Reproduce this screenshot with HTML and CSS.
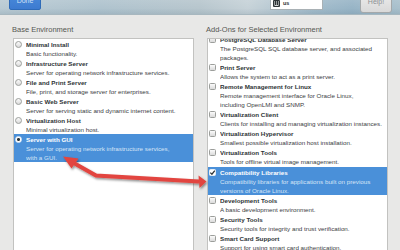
FILE: index.html
```html
<!DOCTYPE html>
<html>
<head>
<meta charset="utf-8">
<link rel="stylesheet" href="styles.css">
</head>
<body>
<div class="page">
  <header class="topbar">
    <button class="done">Done</button>
    <div class="kbd">
      <svg class="kbd-icon" viewBox="0 0 7 7" width="7" height="7">
        <rect x="0" y="0" width="7" height="7" rx="1" fill="#2e3436"/>
        <rect x="1" y="1.5" width="1" height="1" fill="#fff"/>
        <rect x="3" y="1.5" width="1" height="1" fill="#fff"/>
        <rect x="5" y="1.5" width="1" height="1" fill="#fff"/>
        <rect x="1" y="3.5" width="1" height="1" fill="#fff"/>
        <rect x="3" y="3.5" width="1" height="1" fill="#fff"/>
        <rect x="5" y="3.5" width="1" height="1" fill="#fff"/>
        <rect x="1.5" y="5.2" width="4" height="0.8" fill="#fff"/>
      </svg>
      <span class="kbd-label">us</span>
    </div>
    <button class="help">Help!</button>
  </header>

  <main class="content">
    <section class="col">
      <h2 class="col-title">Base Environment</h2>
      <div class="list">
        <div class="item">
          <span class="radio"></span>
          <div class="txt"><div class="name">Minimal Install</div><div class="desc">Basic functionality.</div></div>
        </div>
        <div class="item">
          <span class="radio"></span>
          <div class="txt"><div class="name">Infrastructure Server</div><div class="desc">Server for operating network infrastructure services.</div></div>
        </div>
        <div class="item">
          <span class="radio"></span>
          <div class="txt"><div class="name">File and Print Server</div><div class="desc">File, print, and storage server for enterprises.</div></div>
        </div>
        <div class="item">
          <span class="radio"></span>
          <div class="txt"><div class="name">Basic Web Server</div><div class="desc">Server for serving static and dynamic internet content.</div></div>
        </div>
        <div class="item">
          <span class="radio"></span>
          <div class="txt"><div class="name">Virtualization Host</div><div class="desc">Minimal virtualization host.</div></div>
        </div>
        <div class="item selected">
          <span class="radio on"></span>
          <div class="txt"><div class="name">Server with GUI</div><div class="desc">Server for operating network infrastructure services,<br>with a GUI.</div></div>
        </div>
      </div>
    </section>

    <section class="col">
      <h2 class="col-title">Add-Ons for Selected Environment</h2>
      <div class="list">
        <div class="scroller">
          <div class="item">
            <span class="check"></span>
            <div class="txt"><div class="name">PostgreSQL Database Server</div><div class="desc">The PostgreSQL SQL database server, and associated<br>packages.</div></div>
          </div>
          <div class="item">
            <span class="check"></span>
            <div class="txt"><div class="name">Print Server</div><div class="desc">Allows the system to act as a print server.</div></div>
          </div>
          <div class="item">
            <span class="check"></span>
            <div class="txt"><div class="name">Remote Management for Linux</div><div class="desc">Remote management interface for Oracle Linux,<br>including OpenLMI and SNMP.</div></div>
          </div>
          <div class="item">
            <span class="check"></span>
            <div class="txt"><div class="name">Virtualization Client</div><div class="desc">Clients for installing and managing virtualization instances.</div></div>
          </div>
          <div class="item">
            <span class="check"></span>
            <div class="txt"><div class="name">Virtualization Hypervisor</div><div class="desc">Smallest possible virtualization host installation.</div></div>
          </div>
          <div class="item">
            <span class="check"></span>
            <div class="txt"><div class="name">Virtualization Tools</div><div class="desc">Tools for offline virtual image management.</div></div>
          </div>
          <div class="item selected offset">
            <span class="check on">
              <svg viewBox="0 0 7 7" width="7" height="7"><path d="M1.3 3.6 L2.9 5.2 L5.8 1.6" fill="none" stroke="#2e3436" stroke-width="1.3"/></svg>
            </span>
            <div class="txt"><div class="name">Compatibility Libraries</div><div class="desc">Compatibility libraries for applications built on previous<br>versions of Oracle Linux.</div></div>
          </div>
          <div class="item">
            <span class="check"></span>
            <div class="txt"><div class="name">Development Tools</div><div class="desc">A basic development environment.</div></div>
          </div>
          <div class="item">
            <span class="check"></span>
            <div class="txt"><div class="name">Security Tools</div><div class="desc">Security tools for integrity and trust verification.</div></div>
          </div>
          <div class="item">
            <span class="check"></span>
            <div class="txt"><div class="name">Smart Card Support</div><div class="desc">Support for using smart card authentication.</div></div>
          </div>
        </div>
      </div>
    </section>
  </main>

  <svg class="arrow" viewBox="0 0 400 250" width="400" height="250">
    <defs>
      <filter id="sh" x="-10%" y="-10%" width="120%" height="140%">
        <feDropShadow dx="1" dy="1.5" stdDeviation="0.8" flood-color="#000" flood-opacity="0.45"/>
      </filter>
    </defs>
    <g filter="url(#sh)">
      <polyline points="72,162 96,175.5 199,181.5" fill="none" stroke="#e2453f" stroke-width="4" stroke-linejoin="miter"/>
      <polygon points="63,156.5 78.5,158.5 71.5,168.5" fill="#e2453f"/>
      <polygon points="206.5,181.5 198.5,175.5 199.5,188" fill="#e2453f"/>
    </g>
  </svg>
</div>
</body>
</html>
```

FILE: styles.css
```css
* { box-sizing: border-box; }

html, body {
  margin: 0;
  padding: 0;
}

body {
  width: 400px;
  height: 250px;
  overflow: hidden;
  background: #e8e8e7;
  font-family: "Liberation Sans", Arial, sans-serif;
  color: #2e3436;
}

.page {
  position: relative;
  width: 400px;
  height: 250px;
  display: flex;
  flex-direction: column;
}

/* ---------- top bar ---------- */
.topbar {
  height: 15px;
  flex: none;
  display: flex;
  align-items: flex-start;
  padding: 0 8px 0 9px;
  background:
    linear-gradient(180deg, rgba(255,255,255,0.10) 0%, rgba(0,0,0,0.0) 60%, rgba(60,90,110,0.12) 100%),
    linear-gradient(90deg, #b9cad3 0%, #afc3ce 25%, #b7c6cd 50%, #c6d2d8 62%, #a3bccb 78%, #97b4c6 88%, #a9c0cc 100%);
  border-bottom: 1px solid #a7b7bf;
  overflow: hidden;
}

.done {
  width: 32px;
  height: 18px;
  margin-top: -8px;
  border: 1px solid #2f6bb8;
  border-radius: 2px;
  background: linear-gradient(#4a8cdc, #3d7bd0);
  color: #cfe0f5;
  font-family: "Liberation Sans", Arial, sans-serif;
  font-size: 7px;
  line-height: 16px;
  padding: 0;
}

.kbd {
  margin-left: auto;
  margin-right: 37px;
  width: 53px;
  height: 18px;
  margin-top: -8px;
  background: #fff;
  border: 1px solid #a9b1b5;
  border-top: none;
  display: flex;
  align-items: flex-end;
  gap: 3px;
  padding: 0 0 2px 2px;
}

.kbd-icon {
  display: block;
}

.kbd-label {
  font-size: 5.5px;
  font-weight: bold;
  line-height: 7px;
  color: #2e3436;
  margin-bottom: 0.5px;
}

.help {
  width: 32px;
  height: 22px;
  margin-top: -9px;
  border: 1px solid #a4a8aa;
  border-radius: 3px;
  background: linear-gradient(#eeeeee, #d9d9d9);
  color: #8d9194;
  font-family: "Liberation Sans", Arial, sans-serif;
  font-size: 7px;
  line-height: 20px;
  padding: 0;
}

/* ---------- content ---------- */
.content {
  flex: 1;
  min-height: 0;
  display: grid;
  grid-template-columns: 182px 182px;
  column-gap: 12px;
  padding: 0 12px;
}

.col {
  display: flex;
  flex-direction: column;
  min-height: 0;
}

.col-title {
  margin: 0;
  padding-top: 10px;
  height: 23px;
  font-size: 7.5px;
  font-weight: normal;
  line-height: 10px;
  color: #555753;
}

.list {
  flex: 1;
  min-height: 0;
  margin-left: 1px;
  background: #fff;
  border: 1px solid #c2c2c0;
  border-bottom: none;
  overflow: hidden;
}

.scroller {
  margin-top: -5px;
}

.item {
  display: grid;
  grid-template-columns: 7px 1fr;
  column-gap: 4px;
  padding: 0.5px 2px 0.5px 1px;
  font-size: 6.25px;
  line-height: 9px;
  white-space: nowrap;
}

.item.offset {
  margin-top: 1px;
}

.txt {
  overflow: hidden;
}

.name {
  font-weight: bold;
  color: #2e3436;
}

.desc {
  color: #3c4043;
}

.item.selected {
  background: #4a90d9;
}

.item.selected .name {
  color: #ffffff;
}

.item.selected .desc {
  color: #d6e5f6;
}

.radio,
.check {
  width: 7px;
  height: 7px;
  margin-top: 1px;
  border: 1px solid #9c9e9b;
  background: linear-gradient(#fbfbfb, #dadada);
  display: block;
}

.radio {
  border-radius: 50%;
}

.check {
  border-radius: 1.5px;
}

.radio.on {
  background: radial-gradient(circle, #2e3436 0 1.3px, #ffffff 1.6px);
  border-color: #e6eef7;
}

.check.on {
  background: #ffffff;
  border-color: #e6eef7;
  position: relative;
}

.check.on svg {
  position: absolute;
  left: -1px;
  top: -1px;
}

/* ---------- annotation arrow ---------- */
.arrow {
  position: absolute;
  left: 0;
  top: 0;
  pointer-events: none;
}
```
